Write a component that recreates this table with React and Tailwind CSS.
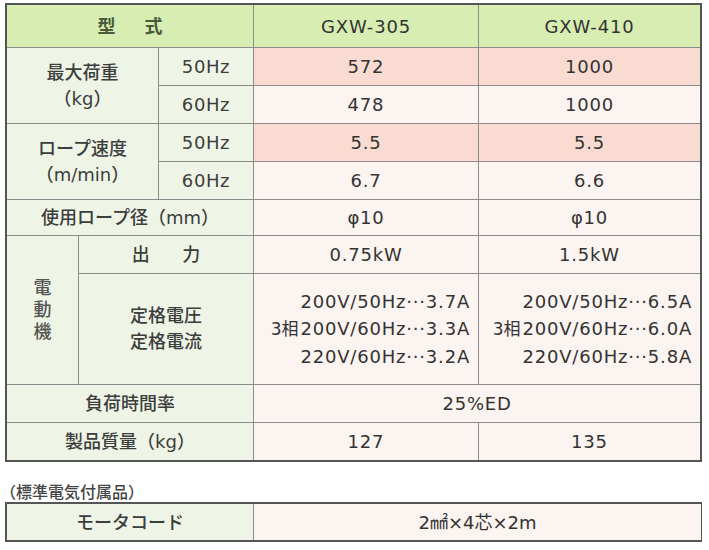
import React from "react";

const font = { fontFamily: '"DejaVu Sans", "Noto Sans CJK JP", sans-serif' };

const lbl = "bg-[#eef5e6] flex items-center justify-center text-[#3d3d3d] text-[18px] font-medium";
const val = "bg-[#fcf4f0] flex items-center justify-center text-[#333] tracking-[0.8px]";
const hot = "bg-[#f9dbd1] flex items-center justify-center text-[#333] tracking-[0.8px]";
const hz = "bg-[#eef5e6] flex items-center justify-center text-[#3d3d3d] tracking-[0.6px]";

const Rated = ({ lines }) => (
  <div className={`${val} justify-end pr-2`}>
    <div className="flex flex-col items-end leading-[27px]">
      <span>{lines[0]}</span>
      <span>
        <span className="text-[17px] tracking-normal mr-0.5">3相</span>
        {lines[1]}
      </span>
      <span>{lines[2]}</span>
    </div>
  </div>
);

export default function App() {
  return (
    <div className="w-[709px] h-[550px] bg-white pt-[3px] text-[18px]" style={font}>
      <div className="ml-[5px] w-[697px] border-2 border-[#555] bg-[#8c8c8c] grid gap-px grid-cols-[71px_79px_94px_224px_221px] grid-rows-[42px_37px_37px_37px_37px_35px_37px_110px_37px_37px]">
        <div className="col-span-3 bg-[#d7edb2] flex items-center justify-center font-bold text-[#4a5a3a] tracking-[1.6em] pl-[1.6em]">型式</div>
        <div className="bg-[#d7edb2] flex items-center justify-center text-[#333] tracking-[0.8px]">GXW-305</div>
        <div className="bg-[#d7edb2] flex items-center justify-center text-[#333] tracking-[0.8px]">GXW-410</div>

        <div className={`${lbl} col-span-2 row-span-2 flex-col leading-[26px]`}>
          <span>最大荷重</span>
          <span>（kg）</span>
        </div>
        <div className={hz}>50Hz</div>
        <div className={hot}>572</div>
        <div className={hot}>1000</div>
        <div className={hz}>60Hz</div>
        <div className={val}>478</div>
        <div className={val}>1000</div>

        <div className={`${lbl} col-span-2 row-span-2 flex-col leading-[26px]`}>
          <span>ロープ速度</span>
          <span>（m/min）</span>
        </div>
        <div className={hz}>50Hz</div>
        <div className={hot}>5.5</div>
        <div className={hot}>5.5</div>
        <div className={hz}>60Hz</div>
        <div className={val}>6.7</div>
        <div className={val}>6.6</div>

        <div className={`${lbl} col-span-3`}>使用ロープ径（mm）</div>
        <div className={val}>φ10</div>
        <div className={val}>φ10</div>

        <div className={`${lbl} row-span-2 flex-col text-[16px] leading-[22px] text-[#555]`}>
          <span>電</span>
          <span>動</span>
          <span>機</span>
        </div>
        <div className={`${lbl} col-span-2 tracking-[1.8em] pl-[1.8em]`}>出力</div>
        <div className={val}>0.75kW</div>
        <div className={val}>1.5kW</div>
        <div className={`${lbl} col-span-2 flex-col leading-[26px]`}>
          <span>定格電圧</span>
          <span>定格電流</span>
        </div>
        <Rated lines={["200V/50Hz···3.7A", "200V/60Hz···3.3A", "220V/60Hz···3.2A"]} />
        <Rated lines={["200V/50Hz···6.5A", "200V/60Hz···6.0A", "220V/60Hz···5.8A"]} />

        <div className={`${lbl} col-span-3`}>負荷時間率</div>
        <div className={`${val} col-span-2`}>25%ED</div>

        <div className={`${lbl} col-span-3`}>製品質量（kg）</div>
        <div className={val}>127</div>
        <div className={val}>135</div>
      </div>

      <div className="mt-[22px] h-[17px] flex items-center text-[16px] text-[#444] font-medium">（標準電気付属品）</div>

      <div className="mt-[1px] ml-[5px] w-[697px] border-2 border-[#555] bg-[#8c8c8c] grid gap-px grid-cols-[246px_447px] grid-rows-[36px]">
        <div className={lbl}>モータコード</div>
        <div className={`${val} tracking-normal`}>2㎟×4芯×2m</div>
      </div>
    </div>
  );
}
